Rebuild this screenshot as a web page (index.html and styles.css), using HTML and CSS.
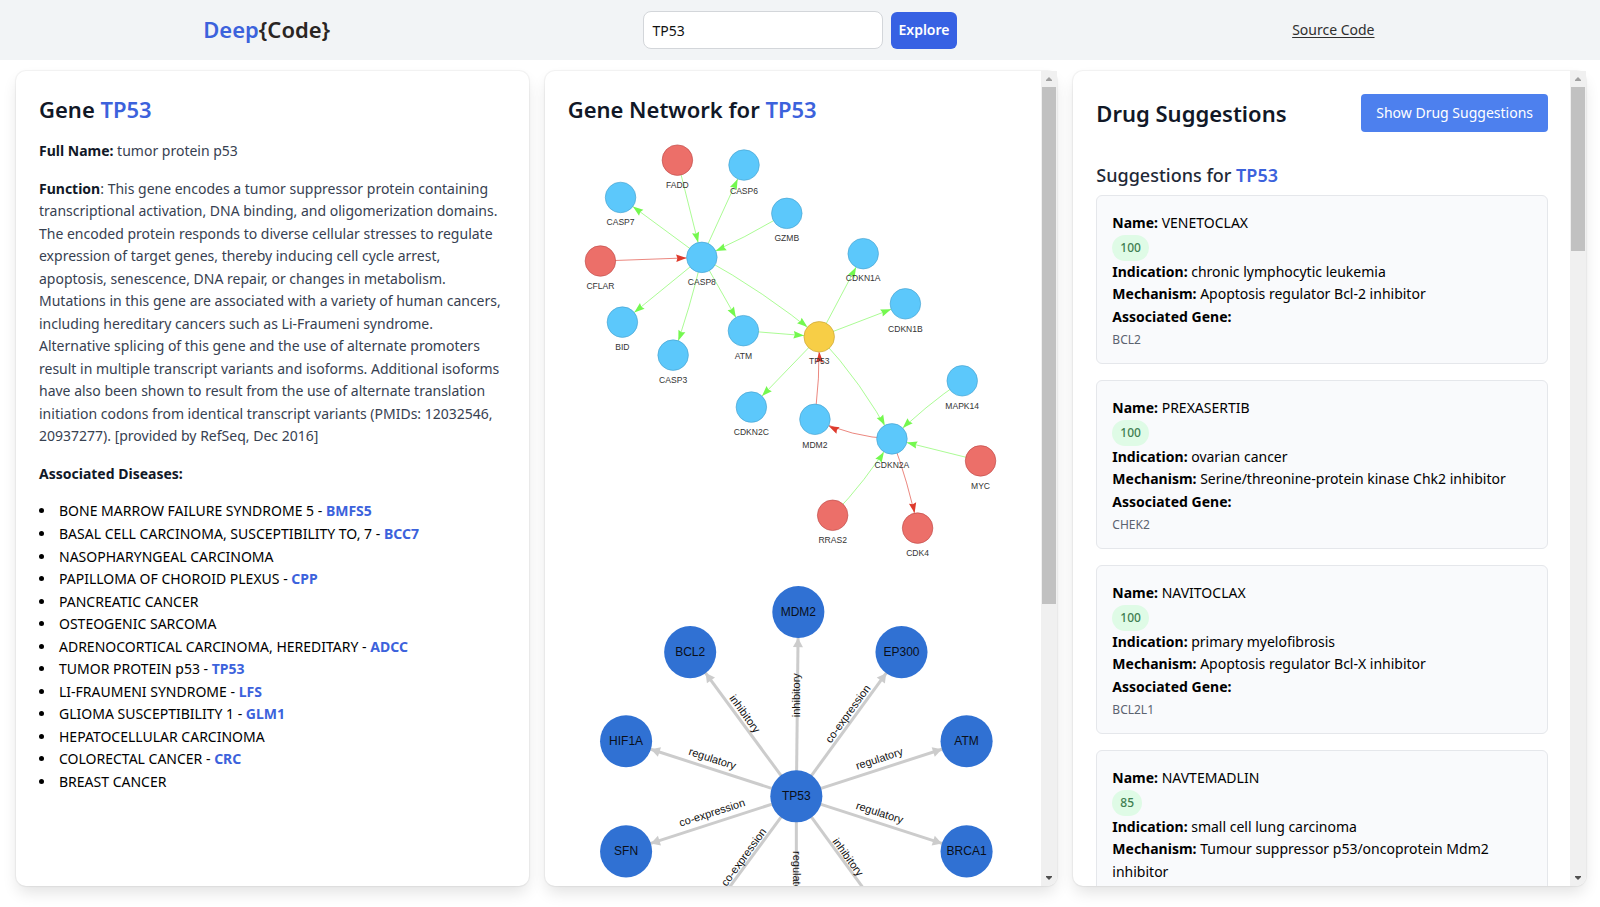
FILE: index.html
```
<!DOCTYPE html>
<html lang="en">
<head>
<meta charset="utf-8">
<title>Deep{Code}</title>
<link rel="stylesheet" href="styles.css">
</head>
<body>
<header class="topbar">
  <div class="logo"><span class="accent">Deep</span>{Code}</div>
  <form class="search">
    <input class="search-input" type="text" value="TP53" aria-label="Gene symbol">
    <button class="search-button" type="button">Explore</button>
  </form>
  <a class="source-link" href="#">Source Code</a>
</header>

<main class="panels">
  <section class="panel">
    <div class="panel-body">
      <h2 class="title">Gene <span class="accent">TP53</span></h2>
      <p class="text"><strong>Full Name:</strong> tumor protein p53</p>
      <p class="text"><strong>Function</strong>: This gene encodes a tumor suppressor protein containing transcriptional activation, DNA binding, and oligomerization domains. The encoded protein responds to diverse cellular stresses to regulate expression of target genes, thereby inducing cell cycle arrest, apoptosis, senescence, DNA repair, or changes in metabolism. Mutations in this gene are associated with a variety of human cancers, including hereditary cancers such as Li-Fraumeni syndrome. Alternative splicing of this gene and the use of alternate promoters result in multiple transcript variants and isoforms. Additional isoforms have also been shown to result from the use of alternate translation initiation codons from identical transcript variants (PMIDs: 12032546, 20937277). [provided by RefSeq, Dec 2016]</p>
      <p class="text"><strong>Associated Diseases:</strong></p>
      <ul class="diseases">
        <li>BONE MARROW FAILURE SYNDROME 5 - <b>BMFS5</b></li>
        <li>BASAL CELL CARCINOMA, SUSCEPTIBILITY TO, 7 - <b>BCC7</b></li>
        <li>NASOPHARYNGEAL CARCINOMA</li>
        <li>PAPILLOMA OF CHOROID PLEXUS - <b>CPP</b></li>
        <li>PANCREATIC CANCER</li>
        <li>OSTEOGENIC SARCOMA</li>
        <li>ADRENOCORTICAL CARCINOMA, HEREDITARY - <b>ADCC</b></li>
        <li>TUMOR PROTEIN p53 - <b>TP53</b></li>
        <li>LI-FRAUMENI SYNDROME - <b>LFS</b></li>
        <li>GLIOMA SUSCEPTIBILITY 1 - <b>GLM1</b></li>
        <li>HEPATOCELLULAR CARCINOMA</li>
        <li>COLORECTAL CANCER - <b>CRC</b></li>
        <li>BREAST CANCER</li>
      </ul>
    </div>
  </section>

  <section class="panel">
    <div class="panel-body">
      <h2 class="title">Gene Network for <span class="accent">TP53</span></h2>
      <svg class="graph" viewBox="0 0 739 705" role="img" aria-label="Signalling network">
        <defs>
          <marker id="tip-green" markerUnits="userSpaceOnUse" markerWidth="18" markerHeight="12" refX="42" refY="6" orient="auto" overflow="visible"><path class="fill-green" d="M0 0 L17 6 L0 12 L2 6 Z"/></marker>
          <marker id="tip-red" markerUnits="userSpaceOnUse" markerWidth="18" markerHeight="12" refX="42" refY="6" orient="auto" overflow="visible"><path class="fill-red" d="M0 0 L17 6 L0 12 L2 6 Z"/></marker>
        </defs>
        <g class="edge-green">
          <path d="M179 33 L219 192"/>
          <path d="M219 192 L288 41"/>
          <path d="M219 192 L86 94"/>
          <path d="M358 120 Q290 160 219 192"/>
          <path d="M219 192 L89 298"/>
          <path d="M219 192 Q200 275 172 352"/>
          <path d="M219 192 L287 312"/>
          <path d="M219 192 Q321 248 411 322"/>
          <path d="M287 312 L411 322"/>
          <path d="M411 322 L483 186"/>
          <path d="M411 322 L552 268"/>
          <path d="M411 322 L300 437"/>
          <path d="M411 322 Q482 398 530 489"/>
          <path d="M645 394 Q584 435 530 489"/>
          <path d="M675 525 L530 489"/>
          <path d="M433 614 Q487 559 530 489"/>
        </g>
        <g class="edge-red">
          <path d="M53 198 L219 192"/>
          <path d="M404 457 Q412 390 411 322"/>
          <path d="M530 489 Q464 486 404 457"/>
          <path d="M530 489 Q557 560 572 635"/>
        </g>
        <g class="node-blue">
          <circle cx="288" cy="41" r="25"/><circle cx="86" cy="94" r="25"/><circle cx="358" cy="120" r="25"/>
          <circle cx="219" cy="192" r="25"/><circle cx="483" cy="186" r="25"/><circle cx="552" cy="268" r="25"/>
          <circle cx="89" cy="298" r="25"/><circle cx="172" cy="352" r="25"/><circle cx="287" cy="312" r="25"/>
          <circle cx="300" cy="437" r="25"/><circle cx="404" cy="457" r="25"/><circle cx="645" cy="394" r="25"/>
          <circle cx="530" cy="489" r="25"/>
        </g>
        <g class="node-red">
          <circle cx="179" cy="33" r="25"/><circle cx="53" cy="198" r="25"/><circle cx="675" cy="525" r="25"/>
          <circle cx="433" cy="614" r="25"/><circle cx="572" cy="635" r="25"/>
        </g>
        <g class="node-yellow"><circle cx="411" cy="322" r="25"/></g>
        <g class="node-label">
          <text x="179" y="78">FADD</text><text x="288" y="88">CASP6</text><text x="86" y="139">CASP7</text>
          <text x="358" y="165">GZMB</text><text x="53" y="244">CFLAR</text><text x="219" y="238">CASP8</text>
          <text x="483" y="231">CDKN1A</text><text x="552" y="314">CDKN1B</text><text x="89" y="344">BID</text>
          <text x="172" y="398">CASP3</text><text x="287" y="358">ATM</text><text x="411" y="367">TP53</text>
          <text x="300" y="483">CDKN2C</text><text x="404" y="504">MDM2</text><text x="645" y="440">MAPK14</text>
          <text x="530" y="536">CDKN2A</text><text x="675" y="571">MYC</text><text x="433" y="660">RRAS2</text>
          <text x="572" y="681">CDK4</text>
        </g>
      </svg>
      <svg class="graph" viewBox="0 0 451 480" role="img" aria-label="Interaction types">
        <defs>
          <marker id="tip-gray" markerUnits="userSpaceOnUse" markerWidth="9" markerHeight="9" refX="35" refY="5" orient="auto" overflow="visible"><path class="fill-gray" d="M0 0 L9 5 L0 10 Z"/></marker>
        </defs>
        <g class="edge-gray">
          <path d="M228 225 L230 41"/><path d="M228 225 L122 81"/><path d="M228 225 L333 81"/>
          <path d="M228 225 L58 170"/><path d="M228 225 L398 170"/><path d="M228 225 L58 280"/>
          <path d="M228 225 L398 280"/><path d="M228 225 L122 369"/><path d="M228 225 L333 369"/>
          <path d="M228 225 L228 409"/>
        </g>
        <g class="hub">
          <circle cx="230" cy="41" r="26"/><circle cx="122" cy="81" r="26"/><circle cx="333" cy="81" r="26"/>
          <circle cx="58" cy="170" r="26"/><circle cx="398" cy="170" r="26"/><circle cx="228" cy="225" r="26"/>
          <circle cx="58" cy="280" r="26"/><circle cx="398" cy="280" r="26"/><circle cx="122" cy="369" r="26"/>
          <circle cx="333" cy="369" r="26"/><circle cx="228" cy="409" r="26"/>
        </g>
        <g class="hub-label">
          <text x="230" y="45">MDM2</text><text x="122" y="85">BCL2</text><text x="333" y="85">EP300</text>
          <text x="58" y="174">HIF1A</text><text x="398" y="174">ATM</text><text x="228" y="229">TP53</text>
          <text x="58" y="284">SFN</text><text x="398" y="284">BRCA1</text>
        </g>
        <g class="edge-label">
          <text transform="translate(229 124) rotate(-90)" y="3">inhibitory</text>
          <text transform="translate(176 143) rotate(54)" y="3">inhibitory</text>
          <text transform="translate(280 143) rotate(-54)" y="3">co-expression</text>
          <text transform="translate(144 188) rotate(18)" y="3">regulatory</text>
          <text transform="translate(311 188) rotate(-18)" y="3">regulatory</text>
          <text transform="translate(144 242) rotate(-18)" y="3">co-expression</text>
          <text transform="translate(311 242) rotate(18)" y="3">regulatory</text>
          <text transform="translate(176 286) rotate(-54)" y="3">co-expression</text>
          <text transform="translate(279 286) rotate(54)" y="3">inhibitory</text>
          <text transform="translate(228 304) rotate(90)" y="3">regulatory</text>
        </g>
      </svg>
    </div>
    <div class="scrollbar" aria-hidden="true">
      <svg class="scroll-arrow" viewBox="0 0 16 16"><path fill="#a0a0a0" d="M8 6 L11 9 V10 H5 V9 Z"/></svg>
      <div class="scroll-track"><div class="scroll-thumb" style="height:66%"></div></div>
      <svg class="scroll-arrow" viewBox="0 0 16 16"><path fill="#505050" d="M5 6 H11 V7 L8 10 L5 7 Z"/></svg>
    </div>
  </section>

  <section class="panel">
    <div class="panel-body">
      <div class="drug-head">
        <h2 class="title">Drug Suggestions</h2>
        <button class="show-button" type="button">Show Drug Suggestions</button>
      </div>
      <h3 class="subtitle">Suggestions for <span class="accent">TP53</span></h3>
      <div class="drugs">
        <article class="drug">
          <p><b>Name:</b> VENETOCLAX</p>
          <span class="score">100</span>
          <p><b>Indication:</b> chronic lymphocytic leukemia</p>
          <p><b>Mechanism:</b> Apoptosis regulator Bcl-2 inhibitor</p>
          <p><b>Associated Gene:</b></p>
          <p class="gene">BCL2</p>
        </article>
        <article class="drug">
          <p><b>Name:</b> PREXASERTIB</p>
          <span class="score">100</span>
          <p><b>Indication:</b> ovarian cancer</p>
          <p><b>Mechanism:</b> Serine/threonine-protein kinase Chk2 inhibitor</p>
          <p><b>Associated Gene:</b></p>
          <p class="gene">CHEK2</p>
        </article>
        <article class="drug">
          <p><b>Name:</b> NAVITOCLAX</p>
          <span class="score">100</span>
          <p><b>Indication:</b> primary myelofibrosis</p>
          <p><b>Mechanism:</b> Apoptosis regulator Bcl-X inhibitor</p>
          <p><b>Associated Gene:</b></p>
          <p class="gene">BCL2L1</p>
        </article>
        <article class="drug">
          <p><b>Name:</b> NAVTEMADLIN</p>
          <span class="score">85</span>
          <p><b>Indication:</b> small cell lung carcinoma</p>
          <p><b>Mechanism:</b> Tumour suppressor p53/oncoprotein Mdm2 inhibitor</p>
        </article>
      </div>
    </div>
    <div class="scrollbar" aria-hidden="true">
      <svg class="scroll-arrow" viewBox="0 0 16 16"><path fill="#a0a0a0" d="M8 6 L11 9 V10 H5 V9 Z"/></svg>
      <div class="scroll-track"><div class="scroll-thumb" style="height:21%"></div></div>
      <svg class="scroll-arrow" viewBox="0 0 16 16"><path fill="#505050" d="M5 6 H11 V7 L8 10 L5 7 Z"/></svg>
    </div>
  </section>
</main>
</body>
</html>
```
FILE: styles.css
```
* { box-sizing: border-box; }

body {
  margin: 0;
  height: 100vh;
  display: flex;
  flex-direction: column;
  background: #fff;
  color: #000;
  font-family: "Noto Sans", "Open Sans", sans-serif;
  font-size: 14px;
  line-height: 1.61;
}

h2, h3, p, ul { margin: 0; padding: 0; }
b, strong { font-weight: 700; }
button, input { font: inherit; }
.accent { color: #3c62dc; }

/* Top bar */
.topbar {
  display: grid;
  grid-template-columns: repeat(3, 1fr);
  align-items: center;
  justify-items: center;
  min-height: 60px;
  background: #f2f4f6;
}
.logo { font-size: 22px; font-weight: 600; color: #2a2523; }
.search { display: flex; align-items: center; gap: 8px; }
.search-input {
  width: 240px;
  height: 38px;
  padding: 0 8px;
  border: 1px solid #d3d6da;
  border-radius: 8px;
  background: #fff;
  color: #111;
}
.search-button {
  height: 37px;
  padding: 0 7px;
  border: 0;
  border-radius: 6px;
  background: #3761e3;
  color: #fff;
  font-weight: 600;
}
.source-link { color: #2f2f2f; text-underline-offset: 2px; }

/* Panels */
.panels {
  flex: 1;
  min-height: 0;
  display: grid;
  grid-template-columns: repeat(3, minmax(0, 1fr));
  gap: 16px;
  padding: 11px 14px 21px 16px;
}
.panel {
  display: flex;
  min-height: 0;
  border-radius: 10px;
  background: #fff;
  box-shadow: 0 0 1px 1px rgba(0, 0, 0, .05), 0 8px 16px -2px rgba(0, 0, 0, .12);
}
.panel-body {
  flex: 1;
  min-width: 0;
  padding: 23px 22px 0 23px;
  overflow-y: auto;
  scrollbar-width: none;
}
.title {
  margin-bottom: 15px;
  font-size: 22px;
  font-weight: 600;
  line-height: 31px;
  color: #111827;
}
.text { margin-bottom: 15px; color: #374151; }
.text strong { color: #111827; }
.diseases { list-style: disc inside; }
.diseases b { color: #3c62dc; }

/* Scrollbar */
.scrollbar {
  width: 16px;
  display: flex;
  flex-direction: column;
  background: #f0f0f0;
  border-bottom-right-radius: 10px;
}
.scroll-arrow { display: block; width: 16px; height: 16px; }
.scroll-track { flex: 1; padding: 0 1px; }
.scroll-thumb { background: #c1c1c1; }

/* Graphs */
.graph { display: block; width: 100%; }
.graph text { font-family: "Liberation Sans", Arial, sans-serif; text-anchor: middle; }
.fill-green { fill: #74f84f; }
.fill-red { fill: #de3a2c; }
.fill-gray { fill: #ccc; }
.edge-green path { fill: none; stroke: #74f84f; stroke-width: 1; marker-end: url(#tip-green); }
.edge-red path { fill: none; stroke: #de3a2c; stroke-width: 1; marker-end: url(#tip-red); }
.edge-gray path { fill: none; stroke: #ccc; stroke-width: 3; marker-end: url(#tip-gray); }
.node-blue circle { fill: #5cc8fb; stroke: #479fcc; }
.node-red circle { fill: #ec6f69; stroke: #bb4946; }
.node-yellow circle { fill: #f7ce46; stroke: #c49f35; }
.node-label text { font-size: 14px; fill: #343434; }
.hub circle { fill: #3071d3; }
.hub-label text { font-size: 12px; fill: #0a0f18; }
.edge-label text { font-size: 11px; fill: #111; }

/* Drug suggestions */
.drug-head {
  display: flex;
  align-items: center;
  justify-content: space-between;
  margin-bottom: 29px;
}
.drug-head .title { margin: 0; }
.show-button {
  height: 38px;
  padding: 0 15px;
  border: 0;
  border-radius: 4px;
  background: #4d80ee;
  color: #fff;
}
.subtitle {
  margin-bottom: 6px;
  font-size: 18px;
  font-weight: 500;
  line-height: 28px;
  color: #1f2937;
}
.subtitle .accent { font-weight: 600; }
.drugs { display: grid; gap: 16px; }
.drug {
  padding: 16px 15px 13px;
  border: 1px solid #e5e7eb;
  border-radius: 6px;
  background: #f9fafc;
}
.score {
  display: block;
  width: fit-content;
  padding: 3px 8px;
  border-radius: 13px;
  background: #dffbe6;
  color: #3f7f52;
  font-size: 12px;
  font-weight: 500;
  line-height: 20px;
}
.drug .gene { margin-top: 2px; font-size: 12px; line-height: 20px; color: #5b6370; }
```
